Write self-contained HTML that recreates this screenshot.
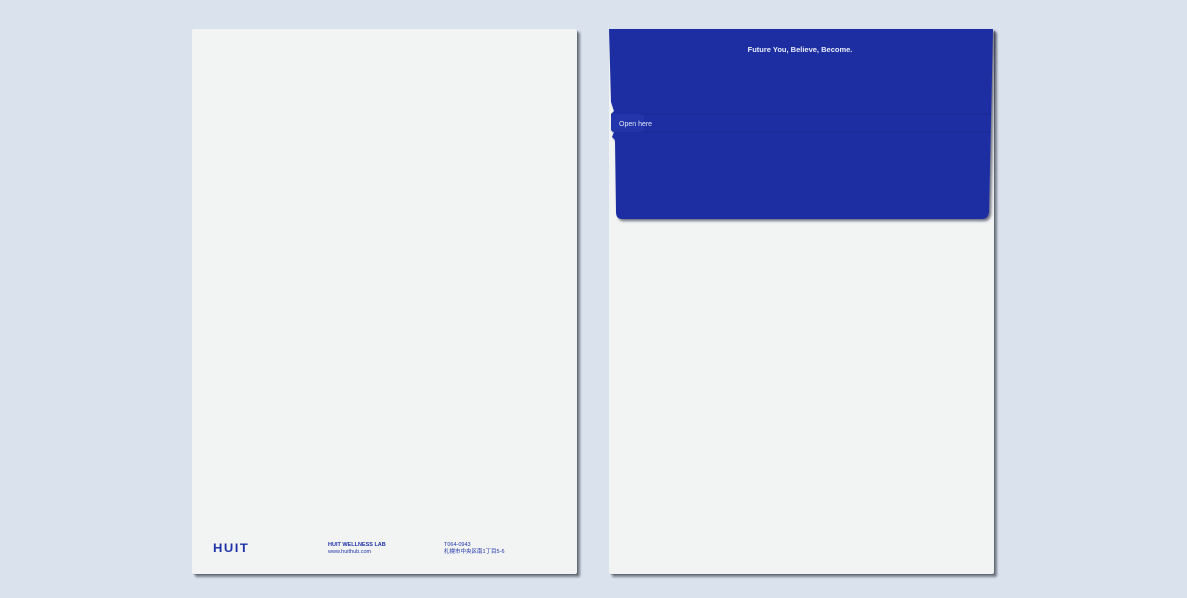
<!DOCTYPE html>
<html><head><style>
body{margin:0;width:1187px;height:598px;background:#dae2ed;position:relative;overflow:hidden;font-family:"Liberation Sans","Noto Sans CJK JP",sans-serif}
.card{position:absolute;top:29px;width:385px;height:545px;background:#f2f3f3;border-radius:2px;box-shadow:3px 3px 2px rgba(40,45,60,.55),1px 1px 0 rgba(0,0,0,.2)}
.b{color:#1f33a8;position:absolute;font-size:5.5px;line-height:7px;font-weight:bold}
</style></head><body>
<div class="card" style="left:192px">
  <div class="b" style="left:21px;top:512px;font-size:13px;line-height:13px;letter-spacing:1.5px;font-weight:bold;transform:scaleY(.95)">HUIT</div>
  <div class="b" style="left:136px;top:513px">HUIT WELLNESS LAB<br><span style="font-weight:normal">www.huithub.com</span></div>
  <div class="b" style="left:252px;top:513px;font-weight:normal">T064-0943<br>札幌市中央区南1丁目5-6</div>
</div>
<div class="card" style="left:609px"></div>
<svg style="position:absolute;left:0;top:0" width="1187" height="598">
  <defs><filter id="s"><feDropShadow dx="2" dy="2" stdDeviation="1.2" flood-color="#101830" flood-opacity=".6"/></filter></defs>
  <path d="M609 29 H993 L989 212 Q988 219 982 219 H622 Q616 219 616 212 L615 140 L612 137 L614 132 L611 130 V114 L614 111 L611 102 Z" fill="#1d2ea2" filter="url(#s)"/>
  <rect x="611" y="114" width="33" height="18" rx="3" fill="#2235ab"/>
  <g stroke="#162680" stroke-width="0.8" fill="none" opacity=".7">
    <path d="M640 114 H990 M640 132 H990"/>
  </g>
  <text x="800" y="52" fill="#e8ecf7" font-size="7.5" font-weight="bold" text-anchor="middle" font-family="Liberation Sans">Future You, Believe, Become.</text>
  <text x="619" y="126" fill="#e0e5f5" font-size="7" font-family="Liberation Sans">Open here</text>
</svg>
</body></html>
